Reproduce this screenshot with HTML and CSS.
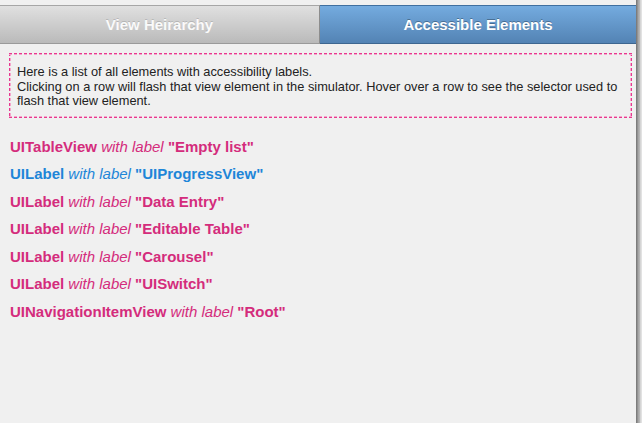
FILE: index.html
```html
<!DOCTYPE html>
<html>
<head>
<meta charset="utf-8">
<link rel="stylesheet" href="styles.css">
</head>
<body>
<div class="frame">
  <div class="main">
    <div class="tabs">
      <div class="tab tab-off">View Heirarchy</div>
      <div class="tab tab-on">Accessible Elements</div>
    </div>
    <div class="info">
      Here is a list of all elements with accessibility labels.<br>
      Clicking on a row will flash that view element in the simulator. Hover over a row to see the selector used to flash that view element.
    </div>
    <ul class="list">
      <li class="row"><b>UITableView</b> <i>with label</i> <b>"Empty list"</b></li>
      <li class="row hover"><b>UILabel</b> <i>with label</i> <b>"UIProgressView"</b></li>
      <li class="row"><b>UILabel</b> <i>with label</i> <b>"Data Entry"</b></li>
      <li class="row"><b>UILabel</b> <i>with label</i> <b>"Editable Table"</b></li>
      <li class="row"><b>UILabel</b> <i>with label</i> <b>"Carousel"</b></li>
      <li class="row"><b>UILabel</b> <i>with label</i> <b>"UISwitch"</b></li>
      <li class="row"><b>UINavigationItemView</b> <i>with label</i> <b>"Root"</b></li>
    </ul>
  </div>
  <div class="edge"></div>
</div>
</body>
</html>
```
FILE: styles.css
```css
html, body {
  margin: 0;
  padding: 0;
  height: 100%;
  background: #f0f0f0;
  font-family: "Liberation Sans", Arial, sans-serif;
}
.frame {
  display: flex;
  height: 100%;
}
.main {
  flex: 1;
  padding-top: 5px;
  background: #f0f0f0;
}
.edge {
  width: 6px;
  background: linear-gradient(to right, #8a8a8a 0, #6f6f6f 1px, #b5b5b5 2px, #9a9a9a 3px, #cfcfcf 4px, #e8e8e8 6px);
}
.tabs {
  display: flex;
  height: 39px;
}
.tab {
  display: flex;
  align-items: center;
  justify-content: center;
  color: #fff;
  font-weight: bold;
  font-size: 15px;
  box-sizing: border-box;
}
.tab-off {
  width: 320px;
  color: #fafafa;
  background: linear-gradient(#e0e0e0, #bababa);
  border-top: 1px solid #a6a6a6;
  border-bottom: 1px solid #9a9a9a;
  border-right: 1px solid #8d8d8d;
  text-shadow: 0 -1px 0 rgba(0,0,0,0.15);
}
.tab-on {
  flex: 1;
  background: linear-gradient(#74abdf, #5383b4);
  border-top: 1px solid #3f6f9f;
  border-bottom: 1px solid #3d6690;
  text-shadow: 0 -1px 0 rgba(0,0,0,0.3);
}
.info {
  margin: 9px 4px 0 9px;
  padding: 12px 11px 9px 8px;
  background:
    repeating-linear-gradient(90deg, #e8378f 0 3px, transparent 3px 5px) left 0 top 0 / 100% 1px no-repeat,
    repeating-linear-gradient(90deg, #f3a6cb 0 3px, transparent 3px 5px) left 0 top 1px / 100% 1px no-repeat,
    repeating-linear-gradient(90deg, #e8378f 0 3px, transparent 3px 5px) left 0 bottom 0 / 100% 1px no-repeat,
    repeating-linear-gradient(90deg, #f3a6cb 0 3px, transparent 3px 5px) left 0 bottom 1px / 100% 1px no-repeat,
    repeating-linear-gradient(180deg, #e8378f 0 3px, transparent 3px 5px) left 0 top 0 / 1px 100% no-repeat,
    repeating-linear-gradient(180deg, #f3a6cb 0 3px, transparent 3px 5px) left 1px top 0 / 1px 100% no-repeat,
    repeating-linear-gradient(180deg, #e8378f 0 3px, transparent 3px 5px) right 0 top 0 / 1px 100% no-repeat,
    repeating-linear-gradient(180deg, #f3a6cb 0 3px, transparent 3px 5px) right 1px top 0 / 1px 100% no-repeat;
  font-size: 12.8px;
  line-height: 14.5px;
  color: #222;
}
.list {
  list-style: none;
  margin: 19px 0 0 0;
  padding: 0 0 0 10px;
}
.row {
  height: 27.5px;
  font-size: 15px;
  line-height: 20px;
  color: #d42c7c;
}
.row.hover {
  color: #1e86d8;
}
```
